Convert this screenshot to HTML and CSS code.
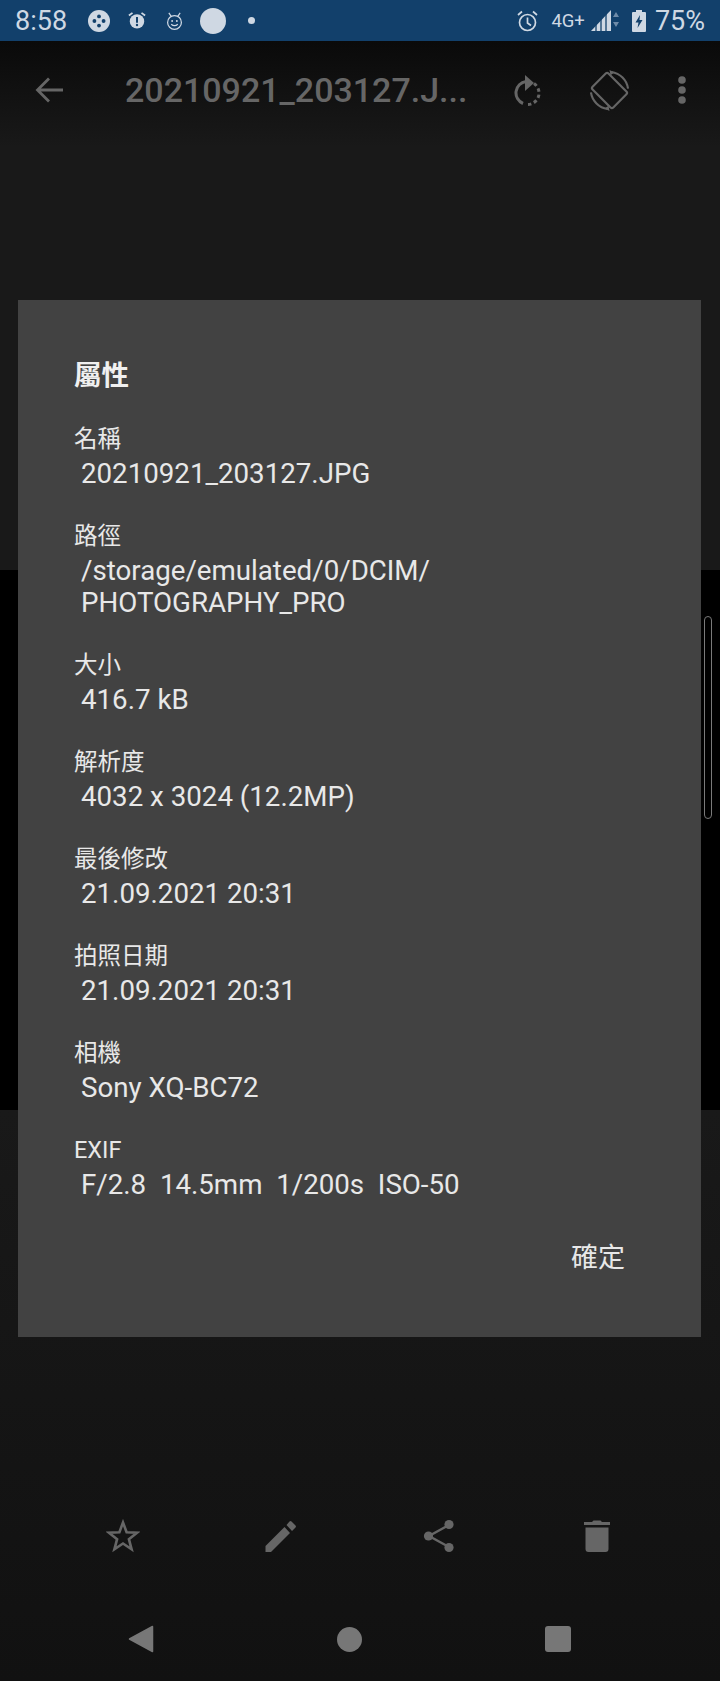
FILE: index.html
```html
<!DOCTYPE html>
<html lang="zh-Hant">
<head>
    <meta charset="UTF-8">
    <meta name="viewport" content="width=device-width, initial-scale=1.0">
    <title>屬性</title>
    <link rel="stylesheet" href="styles.css">
</head>
<body>
    <div class="screen">
        <div class="status-bar">
            <div class="status-left">
                <span class="clock">8:58</span>
                <svg class="st-game" viewBox="0 0 24 24"><circle cx="12" cy="12" r="12" fill="#cfd8e3"/><g fill="#12406b"><circle cx="12" cy="7" r="2.100"/><circle cx="12" cy="17" r="2.100"/><circle cx="7" cy="12" r="2.100"/><circle cx="17" cy="12" r="2.100"/></g></svg>
                <svg class="st-alarm" viewBox="0 0 20 20"><circle cx="10" cy="11" r="8" fill="#cfd8e3"/><path d="M1 4.500 5 1.500M19 4.500 15 1.500" stroke="#cfd8e3" stroke-width="2" fill="none"/><path d="M10 6v6.500" stroke="#12406b" stroke-width="2.200"/><circle cx="10" cy="15" r="1.300" fill="#12406b"/></svg>
                <svg class="st-face" viewBox="0 0 18 19"><g fill="none" stroke="#cfd8e3" stroke-width="1.300"><circle cx="9" cy="11" r="7.300"/><path d="M3 1 5.500 4.500M15 1 12.500 4.500M5.500 13q3.500 3 7 0"/></g><circle cx="6.500" cy="9.500" r="1" fill="#cfd8e3"/><circle cx="11.500" cy="9.500" r="1" fill="#cfd8e3"/></svg>
                <span class="st-disc"></span>
                <span class="st-dot"></span>
            </div>
            <div class="status-right">
                <svg class="st-clock" viewBox="0 0 21 22"><g fill="none" stroke="#cfd8e3" stroke-width="1.700"><circle cx="10.500" cy="12.500" r="8"/><path d="M10.500 7.500v5.500l3.500 2.500M1 5l4-3.500M20 5l-4-3.500"/></g></svg>
                <span class="net">4G+</span>
                <svg class="st-signal" viewBox="0 0 28 21"><path d="M0 21 20 0v21z" fill="#cfd8e3"/><path d="M5 21V13M10 21V8M15 21V3" stroke="#12406b" stroke-width="1.300"/><path d="m25 2 3 5h-6zM25 17l3-5h-6z" fill="#6f8ba8"/></svg>
                <svg class="st-batt" viewBox="0 0 14 22"><path d="M4 0h6v2h3a1 1 0 0 1 1 1v18a1 1 0 0 1-1 1H1a1 1 0 0 1-1-1V3a1 1 0 0 1 1-1h3z" fill="#cfd8e3"/><path d="M8 5 3.500 12.500h3L5.500 18l5-8H7.500z" fill="#12406b"/></svg>
                <span class="percent">75%</span>
            </div>
        </div>

        <div class="top-area">
            <div class="app-bar">
                <svg class="ic-back" viewBox="0 0 28 26"><path d="M28 13H3M14 1.500 2.500 13 14 24.500" fill="none" stroke="#666" stroke-width="2.800"/></svg>
                <span class="file-title">20210921_203127.J...</span>
                <svg class="ic-rotate" viewBox="0 0 28 33"><path d="M12 7.500A11.500 11.500 0 0 0 9 29.500" fill="none" stroke="#666" stroke-width="3"/><path d="M11 1l9 8-9 8z" fill="#666"/><path d="M20 9.500A11.500 11.500 0 0 1 14 30.500" fill="none" stroke="#666" stroke-width="3" stroke-dasharray="3.500 2.800"/></svg>
                <svg class="ic-screen" viewBox="0 0 42 42"><g fill="none" stroke="#666" stroke-width="2.200"><rect x="9.500" y="6" width="23" height="30" rx="2" transform="rotate(-45 21 21)"/><path d="M23 2a20 20 0 0 1 17 17M19 40A20 20 0 0 1 2 23"/></g><path d="m21 0 5 2.500-4 3zM21 42l-5-2.500 4-3z" fill="#666"/></svg>
                <svg class="ic-more" viewBox="0 0 8 28"><circle cx="4" cy="4" r="3.800" fill="#666"/><circle cx="4" cy="14" r="3.800" fill="#666"/><circle cx="4" cy="24" r="3.800" fill="#666"/></svg>
            </div>
        </div>

        <div class="photo-area"></div>

        <div class="bottom-area">
            <div class="actions">
                <svg class="ic-action" viewBox="0 0 34 34"><path d="M17 3.500 20.600 13.200 31 13.700 22.900 20.200 25.600 30.300 17 24.500 8.400 30.300 11.100 20.200 3 13.700 13.400 13.200z" fill="none" stroke="#666" stroke-width="2.600"/></svg>
                <svg class="ic-action" viewBox="0 0 34 34"><path d="M1.500 27 20.500 8l5.500 6-19 19H1.500zM22.500 6l3-3.500a1.500 1.500 0 0 1 2 0l4 4a1.500 1.500 0 0 1 0 2l-3.500 3.500z" fill="#666"/></svg>
                <svg class="ic-action" viewBox="0 0 34 34"><path d="M27 6 7 17l20 11" fill="none" stroke="#666" stroke-width="2.400"/><circle cx="27" cy="5.500" r="4.600" fill="#666"/><circle cx="6.500" cy="17" r="4.600" fill="#666"/><circle cx="27" cy="28.500" r="4.600" fill="#666"/></svg>
                <svg class="ic-action" viewBox="0 0 34 34"><path d="M4 3h8l1.500-1.500h7L22 3h8v3H4zM5.500 8.500h23V30a3 3 0 0 1-3 3h-17a3 3 0 0 1-3-3z" fill="#666"/></svg>
            </div>
            <div class="nav-bar">
                <svg class="ic-nav" viewBox="0 0 26 28"><path d="M24.500 1.500v25L1.500 14z" fill="#777" stroke="#777" stroke-width="1.500" stroke-linejoin="round"/></svg>
                <span class="nav-home"></span>
                <span class="nav-recent"></span>
            </div>
        </div>

        <div class="scroll-thumb"></div>

        <div class="dialog">
            <h1 class="dialog-title">屬性</h1>
            <div class="prop">
                <div class="prop-label">名稱</div>
                <div class="prop-value">20210921_203127.JPG</div>
            </div>
            <div class="prop">
                <div class="prop-label">路徑</div>
                <div class="prop-value">/storage/emulated/0/DCIM/<br>PHOTOGRAPHY_PRO</div>
            </div>
            <div class="prop">
                <div class="prop-label">大小</div>
                <div class="prop-value">416.7 kB</div>
            </div>
            <div class="prop">
                <div class="prop-label">解析度</div>
                <div class="prop-value">4032 x 3024 (12.2MP)</div>
            </div>
            <div class="prop">
                <div class="prop-label">最後修改</div>
                <div class="prop-value">21.09.2021 20:31</div>
            </div>
            <div class="prop">
                <div class="prop-label">拍照日期</div>
                <div class="prop-value">21.09.2021 20:31</div>
            </div>
            <div class="prop">
                <div class="prop-label">相機</div>
                <div class="prop-value">Sony XQ-BC72</div>
            </div>
            <div class="prop">
                <div class="prop-label">EXIF</div>
                <div class="prop-value">F/2.8&nbsp; 14.5mm&nbsp; 1/200s&nbsp; ISO-50</div>
            </div>
            <div class="dialog-actions">
                <span class="ok-button">確定</span>
            </div>
        </div>
    </div>
</body>
</html>
```

FILE: styles.css
```css
body {
    margin: 0;
    background-color: #000;
    font-family: Roboto, "Noto Sans CJK TC", sans-serif;
}

.screen {
    position: relative;
    width: 720px;
    height: 1681px;
    display: flex;
    flex-direction: column;
    overflow: hidden;
}

/* status bar */
.status-bar {
    height: 41px;
    flex: none;
    display: flex;
    justify-content: space-between;
    align-items: center;
    padding: 0 15px 0 15px;
    background-color: #12406b;
    color: #cfd8e3;
}

.status-left,
.status-right {
    display: flex;
    align-items: center;
}

.clock {
    font-size: 27px;
    margin-right: 21px;
}

.st-game {
    width: 22px;
    height: 22px;
    margin-right: 18px;
}

.st-alarm {
    width: 18px;
    height: 19px;
    margin-right: 20px;
}

.st-face {
    width: 17px;
    height: 18px;
    margin-right: 17px;
}

.st-disc {
    width: 26px;
    height: 26px;
    border-radius: 50%;
    background-color: #cfd8e3;
    margin-right: 22px;
}

.st-dot {
    width: 7px;
    height: 7px;
    border-radius: 50%;
    background-color: #cfd8e3;
}

.st-clock {
    width: 21px;
    height: 22px;
    margin-right: 13px;
}

.net {
    font-size: 18.5px;
    margin-right: 6px;
}

.st-signal {
    width: 28px;
    height: 21px;
    margin-right: 13px;
}

.st-batt {
    width: 14px;
    height: 22px;
    margin-right: 9px;
}

.percent {
    font-size: 27px;
}

/* areas behind the dialog */
.top-area {
    height: 529px;
    flex: none;
    background: linear-gradient(#0a0a0a, #191919 20%);
}

.app-bar {
    height: 98px;
    display: flex;
    align-items: center;
    padding-left: 35px;
}

.ic-back {
    width: 28px;
    height: 26px;
    margin-right: 62px;
}

.file-title {
    font-size: 34px;
    font-weight: 500;
    color: #666;
    width: 389px;
    white-space: nowrap;
}

.ic-rotate {
    width: 28px;
    height: 33px;
    margin-right: 47px;
}

.ic-screen {
    width: 41px;
    height: 41px;
    margin-right: 48px;
}

.ic-more {
    width: 8px;
    height: 28px;
}

.photo-area {
    height: 540px;
    flex: none;
    background-color: #000;
}

.bottom-area {
    flex: 1;
    display: flex;
    flex-direction: column;
    justify-content: flex-end;
    background: linear-gradient(#191919, #111);
}

.actions {
    display: grid;
    grid-template-columns: repeat(4, 158px);
    justify-items: center;
    padding-left: 44px;
    margin-bottom: 71px;
}

.ic-action {
    width: 34px;
    height: 34px;
}

.nav-bar {
    display: flex;
    justify-content: space-between;
    align-items: center;
    height: 30px;
    padding: 0 149px 0 128px;
    margin-bottom: 27px;
}

.ic-nav {
    width: 26px;
    height: 28px;
}

.nav-home {
    width: 25px;
    height: 25px;
    border-radius: 50%;
    background-color: #777;
}

.nav-recent {
    width: 26px;
    height: 26px;
    border-radius: 3px;
    background-color: #777;
}

/* dialog sits over everything */
.dialog {
    position: absolute;
    left: 18px;
    top: 300px;
    width: 683px;
    height: 1037px;
    box-sizing: border-box;
    padding: 57px 56px 0;
    background-color: #424242;
    color: #e8e8e8;
}

.dialog-title {
    margin: 0 0 25px;
    font-size: 27.5px;
    line-height: 38px;
    font-weight: 700;
    color: #f0f0f0;
}

.prop {
    margin-bottom: 27px;
}

.prop-label {
    font-size: 23.5px;
    line-height: 38px;
}

.prop-value {
    font-size: 27.7px;
    line-height: 32px;
    margin-left: 7px;
}

.dialog-actions {
    display: flex;
    justify-content: flex-end;
    margin: 39px 20px 0 0;
}

.ok-button {
    font-size: 27px;
    line-height: 36px;
}

.scroll-thumb {
    position: absolute;
    left: 704px;
    top: 616px;
    width: 8px;
    height: 203px;
    box-sizing: border-box;
    border: 1.5px solid #7a7a7a;
    border-radius: 4px;
}
```
